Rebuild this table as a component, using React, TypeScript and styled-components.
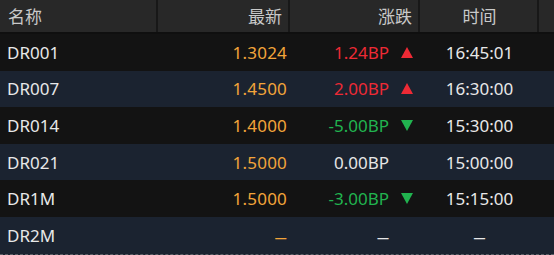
import React from 'react';
import styled, { createGlobalStyle } from 'styled-components';

const GlobalStyle = createGlobalStyle`
  html, body {
    margin: 0;
    padding: 0;
    background: #141414;
  }
  body {
    font-family: 'Noto Sans', 'Noto Sans CJK SC', sans-serif;
  }
`;

type Trend = 'up' | 'down' | 'flat' | 'none';

interface Quote {
  name: string;
  price: string;
  change: string;
  trend: Trend;
  time: string;
}

const EMPTY = '—';

const quotes: Quote[] = [
  { name: 'DR001', price: '1.3024', change: '1.24BP', trend: 'up', time: '16:45:01' },
  { name: 'DR007', price: '1.4500', change: '2.00BP', trend: 'up', time: '16:30:00' },
  { name: 'DR014', price: '1.4000', change: '-5.00BP', trend: 'down', time: '15:30:00' },
  { name: 'DR021', price: '1.5000', change: '0.00BP', trend: 'flat', time: '15:00:00' },
  { name: 'DR1M', price: '1.5000', change: '-3.00BP', trend: 'down', time: '15:15:00' },
  { name: 'DR2M', price: EMPTY, change: EMPTY, trend: 'none', time: EMPTY },
];

const COLUMNS = '158px 132px 130px 119px 1fr';

const trendColor: Record<Trend, string> = {
  up: '#ee2a35',
  down: '#21b34f',
  flat: '#e6e6e6',
  none: '#e6e6e6',
};

// placeholder dash is drawn smaller than the digits
const Value = ({ text }: { text: string }) =>
  text === EMPTY ? <Dash>{EMPTY}</Dash> : <>{text}</>;

/**
 * Money market quote board.
 */
export default function App() {
  return (
    <>
      <GlobalStyle />
      <Board>
        <HeaderRow>
          <HeaderCell $align="left">名称</HeaderCell>
          <HeaderCell $align="right">最新</HeaderCell>
          <HeaderCell $align="right">涨跌</HeaderCell>
          <HeaderCell $align="center">时间</HeaderCell>
          <HeaderCell $align="left" />
        </HeaderRow>

        {quotes.map((q, i) => (
          <Row key={q.name} $striped={i % 2 === 1} $last={i === quotes.length - 1}>
            <NameCell>{q.name}</NameCell>
            <PriceCell>
              <Value text={q.price} />
            </PriceCell>
            <ChangeCell>
              <ChangeValue $color={trendColor[q.trend]}>
                <Value text={q.change} />
              </ChangeValue>
              <ArrowSlot>
                {q.trend === 'up' && (
                  <svg width="12" height="11" viewBox="0 0 12 11">
                    <polygon points="6,0 12,11 0,11" fill={trendColor.up} />
                  </svg>
                )}
                {q.trend === 'down' && (
                  <svg width="12" height="11" viewBox="0 0 12 11">
                    <polygon points="0,0 12,0 6,11" fill={trendColor.down} />
                  </svg>
                )}
              </ArrowSlot>
            </ChangeCell>
            <TimeCell>
              <Value text={q.time} />
            </TimeCell>
            <div />
          </Row>
        ))}
      </Board>
    </>
  );
}

const Board = styled.div`
  width: 554px;
  height: 255px;
  overflow: hidden;
  background: #141414;
  font-size: 17px;
`;

const HeaderRow = styled.div`
  display: grid;
  grid-template-columns: ${COLUMNS};
  height: 32px;
  background: #282828;
  border-bottom: 2px solid #0f0f0f;
  color: #c9c9c9;
`;

const HeaderCell = styled.div<{ $align: 'left' | 'right' | 'center' }>`
  display: flex;
  align-items: center;
  justify-content: ${(p) =>
    p.$align === 'left' ? 'flex-start' : p.$align === 'right' ? 'flex-end' : 'center'};
  padding: 0 6px 0 8px;
  border-right: 2px solid #181818;
  line-height: 1;

  &:last-child {
    border-right: none;
  }
`;

const Row = styled.div<{ $striped: boolean; $last: boolean }>`
  display: grid;
  grid-template-columns: ${COLUMNS};
  height: 36.6px;
  align-items: center;
  background: ${(p) => (p.$striped ? '#1b2330' : '#131313')};
  border-bottom: ${(p) => (p.$last ? '1px dashed #5a5f66' : 'none')};
  color: #e8e8e8;
`;

const NameCell = styled.div`
  padding-left: 7px;
`;

const PriceCell = styled.div`
  text-align: right;
  padding-right: 3px;
  color: #f3a53a;
  letter-spacing: 0.2px;
`;

const ChangeCell = styled.div`
  display: flex;
  justify-content: flex-end;
  align-items: center;
  padding-right: 7px;
`;

const ChangeValue = styled.span<{ $color: string }>`
  color: ${(p) => p.$color};
`;

const ArrowSlot = styled.span`
  display: inline-flex;
  width: 12px;
  margin-left: 12px;
  justify-content: center;
`;

const TimeCell = styled.div`
  text-align: center;
`;

const Dash = styled.span`
  display: inline-block;
  font-size: 12px;
  font-weight: 700;
`;
